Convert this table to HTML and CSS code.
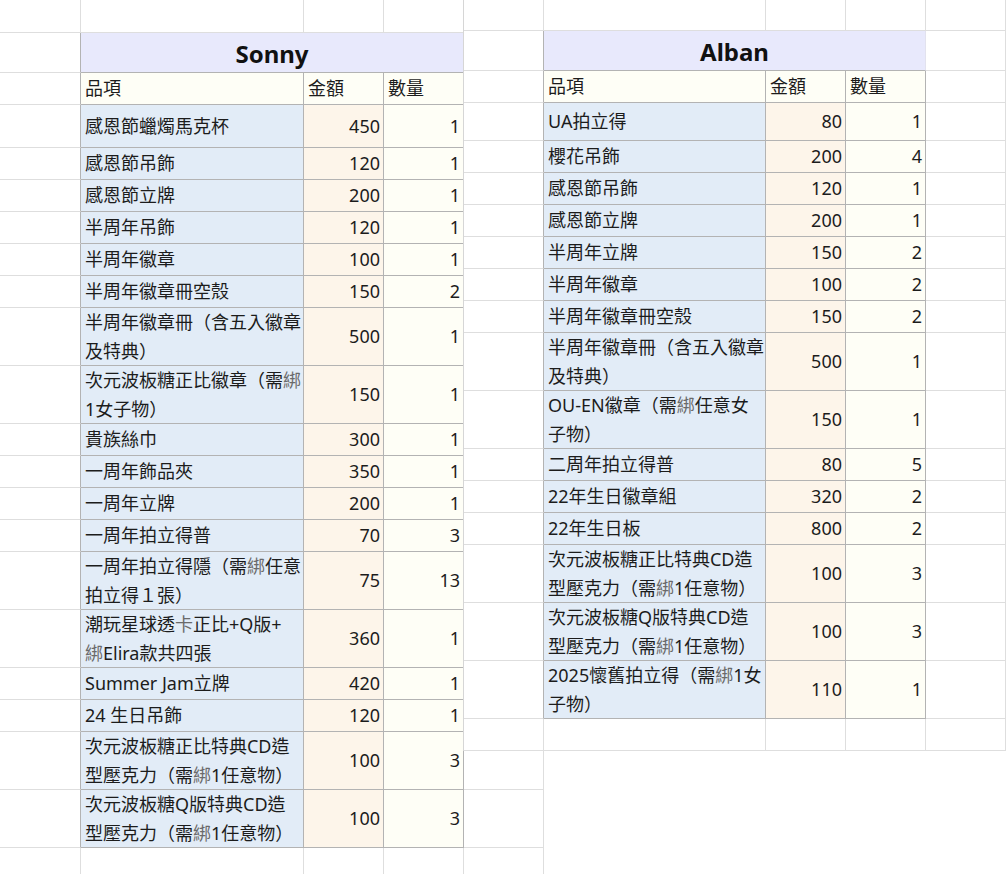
FILE: index.html
```html
<!DOCTYPE html>
<html lang="zh-Hant">
<head>
<meta charset="utf-8">
<title>Sheets</title>
<link rel="stylesheet" href="styles.css">
</head>
<body>
<div class="sheet sheet-left">
  <div class="row h33"><div class="c"></div><div class="c"></div><div class="c"></div><div class="c"></div><div class="c"></div></div>
  <div class="row h40"><div class="c edge"></div><div class="c title">Sonny</div><div class="c"></div></div>
  <div class="row h32"><div class="c edge"></div><div class="c t hd">品項</div><div class="c t hd">金額</div><div class="c t hd">數量</div><div class="c"></div></div>
  <div class="row h43"><div class="c edge"></div><div class="c t it">感恩節蠟燭馬克杯</div><div class="c t am">450</div><div class="c t qt">1</div><div class="c"></div></div>
  <div class="row h32"><div class="c edge"></div><div class="c t it">感恩節吊飾</div><div class="c t am">120</div><div class="c t qt">1</div><div class="c"></div></div>
  <div class="row h32"><div class="c edge"></div><div class="c t it">感恩節立牌</div><div class="c t am">200</div><div class="c t qt">1</div><div class="c"></div></div>
  <div class="row h32"><div class="c edge"></div><div class="c t it">半周年吊飾</div><div class="c t am">120</div><div class="c t qt">1</div><div class="c"></div></div>
  <div class="row h32"><div class="c edge"></div><div class="c t it">半周年徽章</div><div class="c t am">100</div><div class="c t qt">1</div><div class="c"></div></div>
  <div class="row h32"><div class="c edge"></div><div class="c t it">半周年徽章冊空殼</div><div class="c t am">150</div><div class="c t qt">2</div><div class="c"></div></div>
  <div class="row h58"><div class="c edge"></div><div class="c t it"><span>半周年徽章冊（含五入徽章<br>及特典）</span></div><div class="c t am">500</div><div class="c t qt">1</div><div class="c"></div></div>
  <div class="row h58"><div class="c edge"></div><div class="c t it"><span>次元波板糖正比徽章（需<span class="fb">綁</span><br>1女子物）</span></div><div class="c t am">150</div><div class="c t qt">1</div><div class="c"></div></div>
  <div class="row h32"><div class="c edge"></div><div class="c t it">貴族絲巾</div><div class="c t am">300</div><div class="c t qt">1</div><div class="c"></div></div>
  <div class="row h32"><div class="c edge"></div><div class="c t it">一周年飾品夾</div><div class="c t am">350</div><div class="c t qt">1</div><div class="c"></div></div>
  <div class="row h32"><div class="c edge"></div><div class="c t it">一周年立牌</div><div class="c t am">200</div><div class="c t qt">1</div><div class="c"></div></div>
  <div class="row h32"><div class="c edge"></div><div class="c t it">一周年拍立得普</div><div class="c t am">70</div><div class="c t qt">3</div><div class="c"></div></div>
  <div class="row h58"><div class="c edge"></div><div class="c t it"><span>一周年拍立得隱（需<span class="fb">綁</span>任意<br>拍立得１張）</span></div><div class="c t am">75</div><div class="c t qt">13</div><div class="c"></div></div>
  <div class="row h58"><div class="c edge"></div><div class="c t it"><span>潮玩星球透<span class="fb">卡</span>正比+Q版+<br><span class="fb">綁</span>Elira款共四張</span></div><div class="c t am">360</div><div class="c t qt">1</div><div class="c"></div></div>
  <div class="row h32"><div class="c edge"></div><div class="c t it">Summer Jam立牌</div><div class="c t am">420</div><div class="c t qt">1</div><div class="c"></div></div>
  <div class="row h32"><div class="c edge"></div><div class="c t it">24 生日吊飾</div><div class="c t am">120</div><div class="c t qt">1</div><div class="c"></div></div>
  <div class="row h58"><div class="c edge"></div><div class="c t it"><span>次元波板糖正比特典CD造<br>型壓克力（需<span class="fb">綁</span>1任意物）</span></div><div class="c t am">100</div><div class="c t qt">3</div><div class="c"></div></div>
  <div class="row h58"><div class="c edge"></div><div class="c t it"><span>次元波板糖Q版特典CD造<br>型壓克力（需<span class="fb">綁</span>1任意物）</span></div><div class="c t am">100</div><div class="c t qt">3</div><div class="c"></div></div>
  <div class="row h32"><div class="c"></div><div class="c"></div><div class="c"></div><div class="c"></div><div class="c"></div></div>
</div>

<div class="sheet sheet-right">
  <div class="row h31"><div class="c"></div><div class="c"></div><div class="c"></div><div class="c"></div><div class="c"></div></div>
  <div class="row h40"><div class="c edge"></div><div class="c title">Alban</div><div class="c"></div></div>
  <div class="row h32"><div class="c edge"></div><div class="c t hd">品項</div><div class="c t hd">金額</div><div class="c t hd">數量</div><div class="c"></div></div>
  <div class="row h38"><div class="c edge"></div><div class="c t it">UA拍立得</div><div class="c t am">80</div><div class="c t qt">1</div><div class="c"></div></div>
  <div class="row h32"><div class="c edge"></div><div class="c t it">櫻花吊飾</div><div class="c t am">200</div><div class="c t qt">4</div><div class="c"></div></div>
  <div class="row h32"><div class="c edge"></div><div class="c t it">感恩節吊飾</div><div class="c t am">120</div><div class="c t qt">1</div><div class="c"></div></div>
  <div class="row h32"><div class="c edge"></div><div class="c t it">感恩節立牌</div><div class="c t am">200</div><div class="c t qt">1</div><div class="c"></div></div>
  <div class="row h32"><div class="c edge"></div><div class="c t it">半周年立牌</div><div class="c t am">150</div><div class="c t qt">2</div><div class="c"></div></div>
  <div class="row h32"><div class="c edge"></div><div class="c t it">半周年徽章</div><div class="c t am">100</div><div class="c t qt">2</div><div class="c"></div></div>
  <div class="row h32"><div class="c edge"></div><div class="c t it">半周年徽章冊空殼</div><div class="c t am">150</div><div class="c t qt">2</div><div class="c"></div></div>
  <div class="row h58"><div class="c edge"></div><div class="c t it"><span>半周年徽章冊（含五入徽章<br>及特典）</span></div><div class="c t am">500</div><div class="c t qt">1</div><div class="c"></div></div>
  <div class="row h58"><div class="c edge"></div><div class="c t it"><span>OU-EN徽章（需<span class="fb">綁</span>任意女<br>子物）</span></div><div class="c t am">150</div><div class="c t qt">1</div><div class="c"></div></div>
  <div class="row h32"><div class="c edge"></div><div class="c t it">二周年拍立得普</div><div class="c t am">80</div><div class="c t qt">5</div><div class="c"></div></div>
  <div class="row h32"><div class="c edge"></div><div class="c t it">22年生日徽章組</div><div class="c t am">320</div><div class="c t qt">2</div><div class="c"></div></div>
  <div class="row h32"><div class="c edge"></div><div class="c t it">22年生日板</div><div class="c t am">800</div><div class="c t qt">2</div><div class="c"></div></div>
  <div class="row h58"><div class="c edge"></div><div class="c t it"><span>次元波板糖正比特典CD造<br>型壓克力（需<span class="fb">綁</span>1任意物）</span></div><div class="c t am">100</div><div class="c t qt">3</div><div class="c"></div></div>
  <div class="row h58"><div class="c edge"></div><div class="c t it"><span>次元波板糖Q版特典CD造<br>型壓克力（需<span class="fb">綁</span>1任意物）</span></div><div class="c t am">100</div><div class="c t qt">3</div><div class="c"></div></div>
  <div class="row h58"><div class="c edge"></div><div class="c t it"><span>2025懷舊拍立得（需<span class="fb">綁</span>1女<br>子物）</span></div><div class="c t am">110</div><div class="c t qt">1</div><div class="c"></div></div>
  <div class="row h32"><div class="c"></div><div class="c"></div><div class="c"></div><div class="c"></div><div class="c"></div></div>
</div>
</body>
</html>
```

FILE: styles.css
```css
html, body {
  margin: 0;
  padding: 0;
}

body {
  width: 1008px;
  height: 874px;
  overflow: hidden;
  position: relative;
  background: #ffffff;
  font-family: "Noto Sans", "Noto Sans CJK TC", sans-serif;
  font-size: 18px;
  color: #1c1c1c;
}

.sheet {
  display: flex;
  flex-direction: column;
  background: #ffffff;
}

.sheet-left {
  width: 544px;
}

.sheet-right {
  position: absolute;
  top: 0;
  left: 463px;
  width: 545px;
  height: 751px;
  box-sizing: border-box;
  border-left: 1px solid #d6d6d6;
  overflow: hidden;
}

.row {
  display: grid;
  flex: none;
}

.sheet-left .row {
  grid-template-columns: 81px 223px 80px 80px 80px;
}

.sheet-right .row {
  grid-template-columns: 80px 222px 80px 80px 80px;
}

.h31 { height: 31px; }
.h32 { height: 32px; }
.h33 { height: 33px; }
.h38 { height: 38px; }
.h40 { height: 40px; }
.h43 { height: 43px; }
.h58 { height: 58px; }

.c {
  box-sizing: border-box;
  border-right: 1px solid #dedede;
  border-bottom: 1px solid #dedede;
  display: flex;
  align-items: center;
  overflow: hidden;
  white-space: nowrap;
  line-height: 29px;
}

.c.edge {
  border-right-color: #b3b3b3;
}

.title {
  grid-column: span 3;
  justify-content: center;
  background: #e8e9fc;
  font-weight: 700;
  font-size: 24px;
  color: #111111;
  border-bottom-color: #b3b3b3;
  border-right-color: #e2e2ee;
  padding-top: 1px;
}

.c.t {
  border-right-color: #b3b3b3;
  border-bottom-color: #b3b3b3;
}

.hd {
  background: #fefef6;
  padding-left: 4px;
}

.it {
  background: #e2ecf7;
  padding-left: 4px;
}

.am {
  background: #fdf5ea;
  justify-content: flex-end;
  padding-right: 3px;
}

.qt {
  background: #fefef6;
  justify-content: flex-end;
  padding-right: 3px;
}

.fb {
  color: #6a6a6a;
}
```
